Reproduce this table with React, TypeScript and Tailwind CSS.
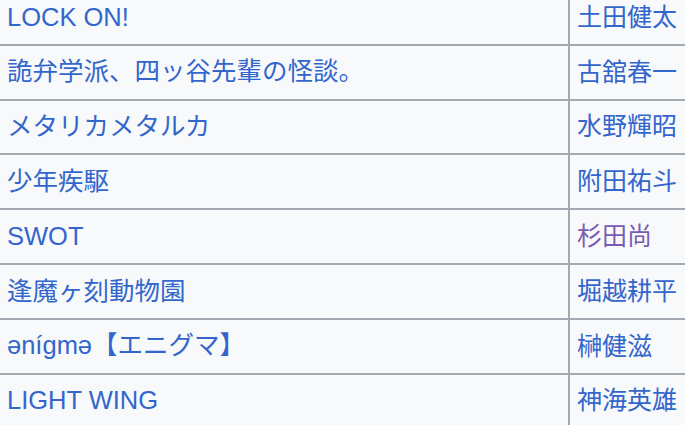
const rows: { title: string; author: string; visited?: boolean }[] = [
  { title: 'LOCK ON!', author: '土田健太' },
  { title: '詭弁学派、四ッ谷先輩の怪談。', author: '古舘春一' },
  { title: 'メタリカメタルカ', author: '水野輝昭' },
  { title: '少年疾駆', author: '附田祐斗' },
  { title: 'SWOT', author: '杉田尚', visited: true },
  { title: '逢魔ヶ刻動物園', author: '堀越耕平' },
  { title: 'ənígmə【エニグマ】', author: '榊健滋' },
  { title: 'LIGHT WING', author: '神海英雄' },
]

export default function App() {
  return (
    <div
      className="w-[685px] h-[425px] overflow-hidden bg-[#f8f9fa]"
      style={{ fontFamily: '"Liberation Sans", "Noto Sans CJK JP", sans-serif' }}
    >
      {/* table is scrolled: first row is partly above the top edge */}
      <div className="-mt-[9px] flex flex-col">
        {rows.map((r) => (
          <div key={r.title} className="flex h-[54.8px] shrink-0 border-b-2 border-[#a2a9b1]">
            <div className="w-[570px] shrink-0 flex items-center pl-[7px] border-r-2 border-[#a2a9b1]">
              <a className="text-[25.5px] leading-none text-[#3366cc] whitespace-nowrap">{r.title}</a>
            </div>
            <div className="flex items-center pl-[7px]">
              <a
                className={
                  'text-[25px] leading-none whitespace-nowrap ' +
                  (r.visited ? 'text-[#795cb2]' : 'text-[#3366cc]')
                }
              >
                {r.author}
              </a>
            </div>
          </div>
        ))}
      </div>
    </div>
  )
}
